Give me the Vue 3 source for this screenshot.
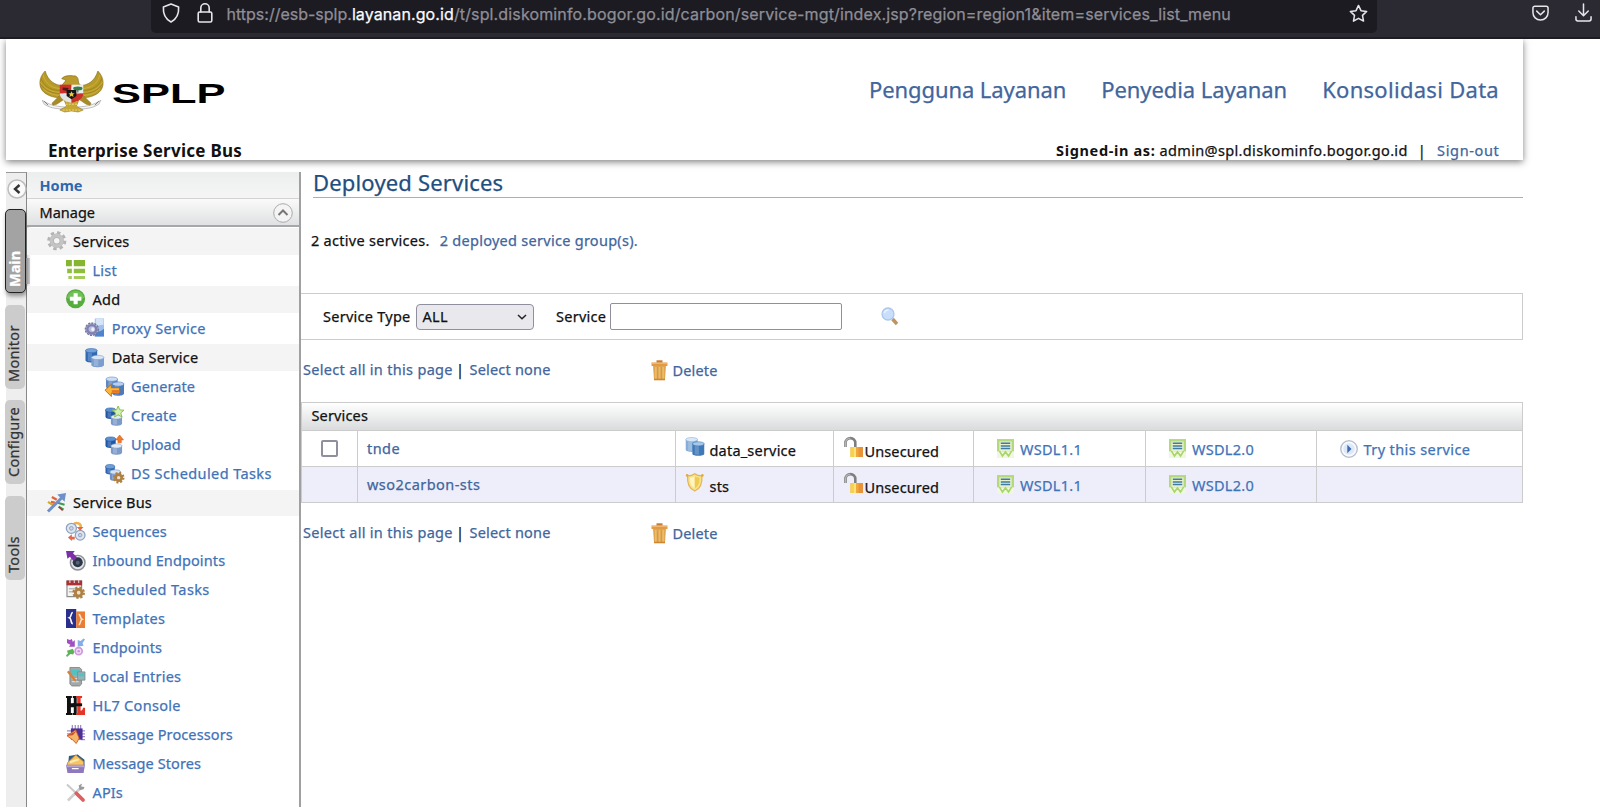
<script setup>
const db = (x, y, w, h, a, b) =>
  `<path d="M${x} ${y + 2}v${h - 4}c0 3 ${w} 3 ${w} 0v-${h - 4}z" fill="${b}"/><path d="M${x + w * 0.2} ${y + 4}h${w * 0.35}v${h - 5}h-${w * 0.35}z" fill="#fff" fill-opacity=".2"/><ellipse cx="${x + w / 2}" cy="${y + 2.2}" rx="${w / 2}" ry="2.200" fill="${a}" stroke="${b}" stroke-width=".6"/>`
const gear = (cx, cy, r, c, hole) =>
  `<circle cx="${cx}" cy="${cy}" r="${r * 0.8}" fill="none" stroke="${c}" stroke-width="${r * 0.4}" stroke-dasharray="${r * 0.34} ${r * 0.288}"/><circle cx="${cx}" cy="${cy}" r="${r * 0.52}" fill="${hole}" stroke="${c}" stroke-width="${r * 0.46}"/>`

const icons = {
  gear: gear(10, 10, 9.8, '#b4b4b4', '#f4f4f4') + '<circle cx="10" cy="10" r="5.400" fill="none" stroke="#c4c4c4" stroke-width="3.400"/>',
  list: '<path d="M0 0h6v6.300H0zM8 0h11.500v6.300H8z" fill="#86b52f"/><path d="M1.200 9h4.800v4.600H1.200zM8 9h11.500v4.600H8z" fill="#8fbe3a"/><path d="M2.400 16.300h3.600v3.200H2.400zM8 16.300h11.500v3.200H8z" fill="#a5cc5a"/>',
  add: '<circle cx="9.800" cy="10" r="9.800" fill="#56ac3c"/><path d="M1 9a9 9 0 0 1 17.600 0c-4 3-13 3-17.600 0z" fill="#72c056"/><path d="M7.800 4.300h4.200V8h3.800v4h-3.800v3.700H7.800V12H4V8h3.800z" fill="#fff"/>',
  proxy: '<path d="M10 .5h9.500v18.500h-9.500z" fill="#9fc0ea"/><path d="M11 1h8v6c-4 0-6 1-8 3z" fill="#d5e4f7"/><path d="M11 13c3 2 6 0 8.500-2v8h-9.500z" fill="#4f83cc"/><ellipse cx="7" cy="11.500" rx="6.600" ry="6.200" fill="#b9bbdc" stroke="#77779f" stroke-width="1.500" stroke-dasharray="2.200 1"/><ellipse cx="7" cy="11.500" rx="4.600" ry="4.200" fill="none" stroke="#7f80b0" stroke-width="2.400"/><ellipse cx="8" cy="11.500" rx="1.600" ry="2" fill="#eef"/>',
  data: db(0.5, 0.5, 12, 14, '#74a2d8', '#2f69b4') + db(6.5, 7.5, 13, 12, '#d8e5f6', '#7d9dce'),
  generate: db(1, 0, 12, 12, '#cddef3', '#5f88c2') + db(7.5, 5, 12, 14, '#b7d0ef', '#4c7bbd') + '<path d="M0 13.500l6.500-6V11H15v5.500H6.500V20z" fill="#f9b63a" stroke="#b5640c" stroke-width=".9"/><path d="M7 13.500h8v2.500H7z" fill="#e8732a"/>',
  create: db(0.5, 2, 10.5, 11, '#5a8fd0', '#1f56a4') + db(6, 9, 11.5, 11, '#e3eaf5', '#7d9bc8') + '<path d="M13.500 0l1.700 4 4.300.3-3.300 2.800 1.100 4.200-3.800-2.300-3.700 2.300 1.100-4.200L7.600 4.300l4.200-.3z" fill="#d5efb2" stroke="#86c047" stroke-width="1"/>',
  upload: db(0.5, 2, 10.5, 11, '#5a8fd0', '#1f56a4') + db(6, 9, 11.5, 11, '#e3eaf5', '#7d9bc8') + '<path d="M15 0l4 5h-2.300v3h-3.400V5H11z" fill="#ee7a2c" stroke="#d65f17" stroke-width=".6"/>',
  tasks: db(0.5, 0.5, 9.5, 10, '#6f9fd6', '#2a64b0') + db(5, 6, 11, 11, '#d5e2f4', '#6e91c6') + gear(14, 14, 6, '#b08043', '#f1dfc4'),
  bus: '<path d="M5 4l5 3M4 9l4 1" stroke="#e2603c" stroke-width="2.400"/><path d="M1 9l6 4" stroke="#d8a42c" stroke-width="2.200"/><path d="M11 10l7 2M12 14l5 3" stroke="#3f9a54" stroke-width="2.200"/><path d="M12 14l4 4" stroke="#a33" stroke-width="1.500"/><path d="M1 19L15 5" stroke="#6d8fca" stroke-width="3"/><path d="M10.500 1.500L19.500 0l-1.500 9z" fill="#6d8fca"/>',
  sequences: '<path d="M7 3c4-4 9-1 8 3" fill="none" stroke="#f0b04a" stroke-width="2.500"/><circle cx="5.500" cy="6.500" r="5.200" fill="#dfe6f0" stroke="#8fa3c0" stroke-width="1.300"/><circle cx="5.500" cy="6.500" r="1.900" fill="#c9d5e6" stroke="#8fa3c0"/><circle cx="14.500" cy="13.500" r="5" fill="#dfe6f0" stroke="#8fa3c0" stroke-width="1.300"/><circle cx="14.500" cy="13.500" r="1.800" fill="#c9d5e6" stroke="#8fa3c0"/><path d="M11 5h7l-3.500 4zM2 16l4-3.500V15h3v3H6v1.500z" fill="#e8674a"/>',
  inbound: '<circle cx="12" cy="12" r="7.500" fill="#e4e6ea" stroke="#8d9098" stroke-width="1.500"/><circle cx="12" cy="11.500" r="5.200" fill="#2c3644"/><circle cx="12" cy="12" r="2" fill="#51647c"/><path d="M0 0h9L7.200 2.300l4.300 4.400-3.700 3.700L4 6 1.500 8z" fill="#7d2fa8"/>',
  sched: '<path d="M1 1h15v16H1z" fill="#f4f4f2" stroke="#8d8d8d" stroke-width="1.200"/><path d="M.5.5h16v5H.5z" fill="#a83238"/><path d="M4 0v3M8.500 0v3M13 0v3" stroke="#e5cccc" stroke-width="1.200"/><path d="M3 9h10M3 12h8" stroke="#bbb" stroke-width="1.500"/>' + gear(13, 13, 6.5, '#b08043', '#f1dfc4'),
  templates: '<path d="M0 0h10.500v19.500H0z" fill="#2a2f8e"/><path d="M10.500 2.500h9V19.500h-9z" fill="#e87d33"/><path d="M7 3.500C4.500 3.500 6 8 3.500 9c2.500 1 1 6 3.500 6" fill="none" stroke="#fff" stroke-width="1.600"/><path d="M13 5.500c2.500 0 1 4 3.500 5-2.500 1-1 5.500-3.500 5.500" fill="none" stroke="#fde6d2" stroke-width="1.600"/>',
  endpoints: '<path d="M1 1l3 1 2-1 1 3 2-2v7H3l1.500-2L1 5z" fill="#a24fc0"/><path d="M12 2l3 1 3-2.500 1.500 1L17 5l1 3-6 1z" fill="#86aee6"/><path d="M1 13l6-2 1.500 3-1 3-3-.5L1 19.500 0 18l2-2z" fill="#5cb257"/><circle cx="13" cy="13.500" r="3.600" fill="#efdcf4" stroke="#cf9adb" stroke-width="1.800"/><circle cx="13" cy="13.500" r="1.200" fill="#c58ad3"/>',
  local: '<path d="M4 .5h10l2 2v15l-2 2H6l-2-2z" fill="#a3a8a8" stroke="#787d7d" stroke-width=".8"/><path d="M5 3h9v5H5z" fill="#4fc2c4"/><path d="M6 12h7M6 15h7" stroke="#d5d9d9" stroke-width="1.200"/><path d="M12 5h7.500v8.500H12z" fill="#9ab3b5" stroke="#6f8384" stroke-width=".7"/><path d="M13 6.500h5.500v3H13z" fill="#4cc4c8"/><path d="M1 5l2-1.500 7 9 .5 2.500-2.500-1z" fill="#d8803a"/>',
  hl7: '<path d="M0 0h6v2H5v5.500h3V2H7V0h4v19.500H7v-2h1v-6H5v6h1.500v2H0v-2h1V2H0z" fill="#111"/><path d="M10.500 0h6v2H15v13c1.500 0 2-1 2.500-3h2v7.500h-9v-2h1V2h-1z" fill="#e63527"/><path d="M7 7.500h9.500v3H7z" fill="#111"/>',
  processors: '<path d="M6.500 0v4M9.500 0v4M12.500 0v4M15 0v4M1 6h4M1 9h4M15 6h4.500M15 9h4.500M15 12h4.500M15 15h4.500" stroke="#9c8bc6" stroke-width="1.300"/><path d="M5 3.500h12V15H5z" fill="#4d2f96"/><path d="M1 11L10 5l3.500 8.500L10.500 19l-4-4z" fill="#f7b569" stroke="#c9561f" stroke-width=".9"/><path d="M1 11l6-.5L11 6z" fill="#c9502c"/>',
  stores: '<path d="M3 2l9-1.500 7 5.500v6H2z" fill="#315d85"/><path d="M1.500 9L10 1l8 7v4H1.500z" fill="#f7c45f" stroke="#d48a22" stroke-width=".9"/><path d="M4 8.500l9-3" stroke="#fde9b8" stroke-width="2"/><path d="M0 11h19.500L18 19.500H1.500z" fill="#9078bd"/><path d="M.5 11.500h18.500v2H.5z" fill="#b6a3d8"/><path d="M6 15h7" stroke="#fff" stroke-width="1.300"/>',
  apis: '<path d="M1 1.500L10 10" stroke="#c9c9c9" stroke-width="2"/><path d="M2 18l13-13" stroke="#cfcfcf" stroke-width="2.800"/><path d="M13 2.500L16.500.5l-1 3 3.500.5-1 2.500-4 1z" fill="#9a9a9a"/><path d="M10.500 10.500l7 7" stroke="#dd5f60" stroke-width="3.800" stroke-linecap="round"/>',
  dbRow: db(0.5, 0.5, 12.5, 15, '#d9e8f7', '#86aed8') + db(7.5, 5, 12.5, 14.5, '#a6c8eb', '#4079b8'),
  shield: '<path d="M2.500 3C5 3 8 2.500 10 .8 12 2.500 15 3 17.500 3c.6 8-1.500 13.500-7.500 16C4 16.500 1.900 11 2.500 3z" fill="#f9e38a" stroke="#e2b457" stroke-width="1.300"/><path d="M5 5c2 0 3.500-.5 5-1.500V16c-4-2-5.200-6-5-11z" fill="#fdf5c4"/><path d="M10 3.500V16c4-2 5.200-6 5-11-2 0-3.500-.5-5-1.500z" fill="#f0cb52"/><circle cx="2" cy="2.500" r="1.400" fill="#e0ab42"/><circle cx="18" cy="2.500" r="1.400" fill="#e0ab42"/>',
  lock: '<path d="M1.500 10V6a4.900 4.900 0 0 1 9.800 0v4" fill="none" stroke="#7e7e7e" stroke-width="2.600"/><path d="M1.500 10V6a4.900 4.900 0 0 1 4.900-4.900" fill="none" stroke="#b5b5b5" stroke-width="1.200"/><path d="M6.500 10H19v10H6.500z" fill="#f0a83a"/><path d="M6.500 10h3v10h-3z" fill="#f5d24a"/><path d="M9.500 10h2.500v10H9.500z" fill="#fbe27a"/><path d="M14.500 10H19v10h-4.500z" fill="#e8923a"/>',
  wsdl: '<path d="M0 0h18v20H0z" fill="#eff7e0"/><path d="M0 0h18v13H0z" fill="#b4d87c"/><path d="M2.500 2.500h13V13h-13z" fill="#e6f2cf"/><path d="M4 4.500h10M4 7.300h10M4 10h10" stroke="#3f7ba2" stroke-width="1.600"/><path d="M2.500 12.500l3.300 5.500L9 13.500l3.200 4.500 3.300-5.500" fill="none" stroke="#a8d468" stroke-width="1.700"/>',
  play: '<circle cx="9" cy="9" r="8.200" fill="#dfe8f7" stroke="#b9c0cb" stroke-width="1.500"/><circle cx="9" cy="9" r="6.600" fill="none" stroke="#f7faff" stroke-width="1.600"/><path d="M7.300 4.800L11.500 9l-4.200 4.200z" fill="#3b6cb4"/>',
  trash: '<path d="M2 5h13l-1 15H3z" fill="#dfa550"/><path d="M4.800 7v12M8.500 7v12M12.200 7v12" stroke="#eabb69" stroke-width="1.800"/><path d="M6.600 7v12M10.400 7v12" stroke="#cf9544" stroke-width=".8"/><path d="M.5 2.500h16V6H.5z" fill="#e39a45"/><path d="M1 3.300h15" stroke="#f0bd78" stroke-width="1"/><path d="M5.500.3h6v2.200h-6z" fill="#c97a2e"/><path d="M3 18.700h11v1.600H3z" fill="#cf8634"/>',
  search: '<path d="M11.500 12l4.500 5" stroke="#c0935e" stroke-width="3.400"/><circle cx="7" cy="7" r="6" fill="#c9defa" stroke="#aec6ec" stroke-width="1.300"/><path d="M3.500 6a4 4 0 0 1 4-3" fill="none" stroke="#eaf3ff" stroke-width="1.500"/>',
}

const menu = [
  ['Services', 'gear', 0, 's1', true],
  ['List', 'list', 1, 's2'],
  ['Add', 'add', 1, 's3', true],
  ['Proxy Service', 'proxy', 2, 's3'],
  ['Data Service', 'data', 2, 's2', true],
  ['Generate', 'generate', 3, 's1'],
  ['Create', 'create', 3, 's2'],
  ['Upload', 'upload', 3, 's1'],
  ['DS Scheduled Tasks', 'tasks', 3, 's4'],
  ['Service Bus', 'bus', 0, 's1', true],
  ['Sequences', 'sequences', 1, 's1'],
  ['Inbound Endpoints', 'inbound', 1, 's1'],
  ['Scheduled Tasks', 'sched', 1, 's4'],
  ['Templates', 'templates', 1, 's3'],
  ['Endpoints', 'endpoints', 1, 's1'],
  ['Local Entries', 'local', 1, 's2'],
  ['HL7 Console', 'hl7', 1, 's3'],
  ['Message Processors', 'processors', 1, 's1'],
  ['Message Stores', 'stores', 1, 's1'],
  ['APIs', 'apis', 1, 's1'],
]
const tabs = ['Main', 'Monitor', 'Configure', 'Tools']
const rows = [
  { name: 'tnde', type: 'data_service', icon: 'dbRow', selectable: true },
  { name: 'wso2carbon-sts', type: 'sts', icon: 'shield', selectable: false },
]
</script>

<template>
  <div class="page">
    <div class="browser">
      <div class="url">
        <svg class="i-shield" viewBox="0 0 18 20"><path d="M9 1l7.600 3c.5 7-2 12-7.600 15C3.400 16 .9 11 1.400 4z" /></svg>
        <svg class="i-lock" viewBox="0 0 16 20"><rect x="1.200" y="9" width="13.600" height="10" rx="1.500" /><path d="M3.800 9V5a4.200 4.200 0 0 1 8.400 0v4" /></svg>
        <span class="addr"><span class="a1">https://esb-splp.</span><b>layanan.go.id</b><span class="a2">/t/spl.diskominfo.bogor.go.id/carbon/service-mgt/index.jsp?region=region1&amp;item=services_list_menu</span></span>
        <svg class="i-star" viewBox="0 0 20 20"><path d="M10 1.500l2.600 5.500 6 .8-4.400 4.200 1.100 6L10 15.100 4.700 18l1.100-6L1.400 7.800l6-.8z" /></svg>
      </div>
      <svg class="i-pocket" viewBox="0 0 18 18"><path d="M3 1.200h12a2 2 0 0 1 2 2V8A8 8 0 0 1 1 8V3.200a2 2 0 0 1 2-2z" /><path d="M5 6.500l4 3.800 4-3.800" /></svg>
      <svg class="i-down" viewBox="0 0 18 20"><path d="M9 1v12M4 8.500l5 5 5-5M1 14.500V17a2 2 0 0 0 2 2h12a2 2 0 0 0 2-2v-2.500" /></svg>
    </div>

    <header class="head">
      <div class="brand">
        <svg class="garuda" viewBox="0 0 66 43">
          <g stroke="#7d6415" stroke-width=".6">
            <path d="M6 0C-1 7-1 17 5 22c5 4 12 6 19 5l1-12C16 15 9 10 6 0zM60 0c7 7 7 17 1 22-5 4-12 6-19 5l-1-12C50 15 57 10 60 0z" fill="#b89a26" />
            <path d="M4 4c2 9 9 14 19 14M1 11c4 7 11 11 21 11M4 18c5 5 11 7 19 7M62 4c-2 9-9 14-19 14M65 11c-4 7-11 11-21 11M62 18c-5 5-11 7-19 7" fill="none" stroke="#d9c04a" />
            <path d="M2 8c3 8 10 12 20 12M2 14c4 6 11 9 20 9M64 8c-3 8-10 12-20 12M64 14c-4 6-11 9-20 9" fill="none" stroke="#86701c" stroke-width=".5" />
            <path d="M22 16c2-3 5-5 5-7l-4-1c1-2 5-4 12-3 3-.5 5 2 5 5 0 2 1 4 4 6z" fill="#bb9b2b" />
          </g>
          <path d="M3 30c8 5 15 7 30 7s22-2 30-7l-2 4c-8 5-15 5-28 5s-20 0-28-5z" fill="#f4f4f4" stroke="#999" stroke-width=".6" />
          <path d="M5 31l4 4M61 31l-4 4" stroke="#555" stroke-width=".8" />
          <g stroke="#8a701c" stroke-width=".5">
            <path d="M22 24l-9 9 1 2 4-1 9-6zM44 24l9 9-1 2-4-1-9-6z" fill="#a98b26" />
            <path d="M25 29h16l-3 7 7 4-5 2-7-1-7 1-5-2 7-4z" fill="#c8a633" />
          </g>
          <path d="M27 31h13M27 34h12M24 40h18" stroke="#efdd85" stroke-width=".9" stroke-dasharray="2 1.200" />
          <path d="M21 14h12v9H21z" fill="#cb302a" /><path d="M33 14h12v9H33z" fill="#ececec" />
          <path d="M21 23h12v9.500c-7-1-12-4.500-12-9.500z" fill="#e4e4e4" /><path d="M33 23h12c0 5-5 8.500-12 9.500z" fill="#cb302a" />
          <path d="M24 17l6 .5-1 3-5-1z" fill="#541a17" /><ellipse cx="39.500" cy="17.800" rx="4.800" ry="2" fill="#2f8147" /><path d="M39.500 19v3" stroke="#3b5b31" />
          <path d="M28 19.500h10v6l-5 3.500-5-3.500z" fill="#161616" /><path d="M33 20.800l1 2 2.200.2-1.700 1.400.6 2.200-2.100-1.200-2.100 1.200.6-2.200-1.700-1.400 2.200-.2z" fill="#f0ca35" />
        </svg>
        <span class="splp">SPLP</span>
      </div>
      <nav class="top"><a class="t1">Pengguna Layanan</a><a class="t2">Penyedia Layanan</a><a class="t3">Konsolidasi Data</a></nav>
      <div class="product">Enterprise Service Bus</div>
      <div class="signed"><b>Signed-in as:</b><span class="who">admin@spl.diskominfo.bogor.go.id</span><i>|</i><a>Sign-out</a></div>
    </header>

    <div class="body">
      <aside class="tabs">
        <svg class="collapse" viewBox="0 0 20 20"><circle cx="10" cy="10" r="9" /><path d="M12.500 6L8 10l4.500 4" /></svg>
        <div v-for="(t, i) in tabs" :key="t" :class="['tab', { on: i === 0 }]"><span>{{ t }}</span></div>
      </aside>
      <aside class="menu">
        <div class="home">Home</div>
        <div class="manage"><span>Manage</span><svg viewBox="0 0 20 20"><circle cx="10" cy="10" r="9.300" /><path d="M5.500 12L10 7.500l4.500 4.500" /></svg></div>
        <div v-for="m in menu" :key="m[0]" :class="['item', 'd' + m[2], m[3], { group: m[4] }]">
          <div class="band"><svg viewBox="0 0 20 20" v-html="icons[m[1]]"></svg><span>{{ m[0] }}</span></div>
        </div>
        <i class="nub"></i>
      </aside>

      <main class="main">
        <h1>Deployed Services</h1>
        <p class="count"><span>2 active services.</span><a>2 deployed service group(s).</a></p>
        <div class="filter">
          <span class="l1">Service Type</span>
          <div class="select"><span>ALL</span><svg viewBox="0 0 10 6"><path d="M1 1l4 3.700L9 1" /></svg></div>
          <span class="l2">Service</span>
          <div class="input"></div>
          <svg class="search" viewBox="0 0 19 19" v-html="icons.search"></svg>
        </div>
        <div class="actions"><a class="all">Select all in this page</a><i>|</i><a class="none">Select none</a><svg viewBox="0 0 17 21" v-html="icons.trash"></svg><a class="del">Delete</a></div>
        <section class="table">
          <div class="th">Services</div>
          <div v-for="r in rows" :key="r.name" class="tr">
            <div class="c0"><div v-if="r.selectable" class="check"></div></div>
            <div class="c1"><a>{{ r.name }}</a></div>
            <div class="c2"><svg viewBox="0 0 20 20" v-html="icons[r.icon]"></svg><span>{{ r.type }}</span></div>
            <div class="c3"><svg viewBox="0 0 20 20" v-html="icons.lock"></svg><span>Unsecured</span></div>
            <div class="c4"><svg viewBox="0 0 18 20" v-html="icons.wsdl"></svg><a>WSDL1.1</a></div>
            <div class="c4"><svg viewBox="0 0 18 20" v-html="icons.wsdl"></svg><a>WSDL2.0</a></div>
            <div class="c6"><template v-if="r.selectable"><svg viewBox="0 0 18 18" v-html="icons.play"></svg><a>Try this service</a></template></div>
          </div>
        </section>
        <div class="actions"><a class="all">Select all in this page</a><i>|</i><a class="none">Select none</a><svg viewBox="0 0 17 21" v-html="icons.trash"></svg><a class="del">Delete</a></div>
      </main>
    </div>
  </div>
</template>

<style>
body { margin: 0; background: #fff; }
</style>
<style scoped>
* { box-sizing: border-box; }
.page { width: 1600px; height: 807px; overflow: hidden; background: #fff; color: #111; font: 14.5px/20px "Noto Sans", "Open Sans", sans-serif; white-space: nowrap; display: flex; flex-direction: column; -webkit-text-stroke: .25px; }
svg { display: block; flex: none; overflow: visible; }
i { font-style: normal; }
a { color: #41659c; }
.browser { height: 39px; flex: none; background: #2b2a33; border-bottom: 2px solid #1d1c21; display: flex; position: relative; z-index: 2; }
.browser svg { fill: none; stroke: #e6e6ea; stroke-width: 1.6; stroke-linejoin: round; stroke-linecap: round; }
.url { margin-left: 151px; width: 1226px; height: 33px; background: #1c1b22; border-radius: 0 0 5px 5px; display: flex; }
.i-shield { width: 18px; height: 20px; margin: 3px 0 0 10.5px; }
.i-lock { width: 16px; height: 20px; margin: 3px 0 0 17px; }
.addr { margin: 4px 0 0 14px; width: 1122px; font: 16px/20px Inter, Roboto, sans-serif; color: #8f8e96; }
.addr b { font-weight: 400; color: #fbfbfe; letter-spacing: .1px; }
.a2 { letter-spacing: .14px; }
.i-star { width: 19px; height: 19px; margin-top: 4px; }
.i-pocket { width: 17px; height: 17px; margin: 5px 0 0 155px; }
.i-down { width: 17px; height: 19px; margin: 3px 0 0 26px; }
.head { flex: none; margin-left: 5.5px; width: 1517.5px; height: 121px; background: #fff; box-shadow: 0 2px 7px rgba(0, 0, 0, .5); display: grid; grid-template: 84px 37px / 1fr auto; position: relative; z-index: 1; }
.brand { display: flex; padding: 32px 0 0 33.5px; }
.garuda { width: 65px; height: 42px; }
.splp { font: bold 28px/28px "Liberation Sans", sans-serif; color: #000; transform: scaleX(1.55); transform-origin: 0 0; margin: 9px 0 0 8px; height: 28px; -webkit-text-stroke: 0; }
.top { display: flex; gap: 35px; padding: 35px 24px 0 0; font-size: 22px; line-height: 30px; justify-content: flex-end; }
.t1, .t2 { letter-spacing: -.08px; } .t3 { letter-spacing: .29px; }
.product { font-weight: bold; font-size: 17px; line-height: 24px; padding: 16px 0 0 42.5px; letter-spacing: .26px; -webkit-text-stroke: 0; }
.signed { display: flex; justify-content: flex-end; padding: 17px 23.500px 0 0; letter-spacing: .35px; }
.signed b { letter-spacing: .65px; -webkit-text-stroke: 0; } .signed a { letter-spacing: .65px; }
.who { margin-left: 4px; } .signed i { margin: 0 11px 0 10px; }
.body { flex: 1; margin: 12px 0 0 6px; display: flex; }
.tabs { width: 21px; background: #eee; border-top: 1px solid #999; border-right: 1px solid #888; height: 635px; }
.collapse { width: 20px; height: 20px; margin: 6px 0 0 1px; }
.collapse circle { fill: #fafafa; stroke: #bdbdbd; stroke-width: 1.5; }
.collapse path { fill: none; stroke: #333; stroke-width: 2.4; }
.tab { width: 20px; height: 84px; margin: 11.6px 0 0 -1px; background: #ccc; border-radius: 5px; color: #333; position: relative; letter-spacing: .3px; }
.tab span { writing-mode: vertical-rl; transform: rotate(180deg); display: block; width: 17px; height: 84px; line-height: 17px; padding-top: 6.500px; }
.tab.on { background: #a3a3a3; border: 1px solid #222; width: 21px; margin-top: 10px; color: #fff; font-weight: bold; letter-spacing: 0; box-shadow: 1px 3px 4px rgba(0, 0, 0, .4); }
.menu { width: 274px; height: 635px; border-right: 2px solid #a0a0a0; position: relative; }
.home { height: 27px; background: linear-gradient(#eceeee, #f5f5f5); border-bottom: 1px solid #d3d3d3; color: #2e68b0; font-weight: bold; padding: 3px 0 0 12.5px; -webkit-text-stroke: 0; }
.manage { height: 28px; background: linear-gradient(#fafafa, #dfe1e2); border-bottom: 2px solid #a5a8ab; padding: 3px 6px 0 12.5px; display: flex; justify-content: space-between; margin-bottom: 1.4px; }
.manage svg { width: 20px; height: 20px; fill: #f4f4f4; stroke: #aaa; margin-top: 1px; }
.manage svg path { stroke: #777; stroke-width: 2; fill: none; }
.item { height: 29.03px; color: #3f73b8; }
.band { height: 26.6px; display: flex; align-items: center; }
.band svg { width: 19.5px; height: 19.5px; margin-top: -1px; }
.band span { margin: -2px 0 0 7px; }
.s1 { letter-spacing: .12px; } .s2 { letter-spacing: .2px; } .s3 { letter-spacing: .3px; } .s4 { letter-spacing: .4px; }
.group { color: #111; } .group .band { background: #f4f4f4; }
.d0 .band { padding-left: 19.5px; } .d1 .band { padding-left: 39px; } .d2 .band { padding-left: 58.2px; } .d3 .band { padding-left: 77.6px; }
.nub { position: absolute; left: -1px; top: 86px; width: 4px; height: 26px; background: linear-gradient(90deg, #888, #ccc); }
.main { width: 1222px; }
h1 { margin: -1px 0 0 11.5px; padding-left: .5px; font-weight: 400; font-size: 22px; line-height: 22px; height: 27px; color: #1f4e80; border-bottom: 1.5px solid #9fb0cf; letter-spacing: .17px; }
.count { margin: 31.5px 0 0 10px; height: 20px; display: flex; gap: 10px; letter-spacing: .28px; }
.filter { margin-top: 43.5px; height: 47px; border: 1px solid #ccc; border-left: 0; display: flex; align-items: center; padding-left: 22px; letter-spacing: .26px; }
.filter span { margin-top: -1px; }
.l1 { width: 92.5px; } .l2 { margin-left: 22.5px; width: 54px; }
.select { width: 118px; height: 26px; background: #e9e9ed; border: 1px solid #8f8f9d; border-radius: 4px; display: flex; align-items: center; justify-content: space-between; padding: 0 6px; }
.select svg { width: 10px; height: 6px; fill: none; stroke: #222; stroke-width: 1.5; }
.input { width: 232px; height: 27px; border: 1px solid #8f8f9d; border-radius: 2px; }
.search { width: 19px; height: 19px; margin-left: 39px; }
.actions { display: flex; height: 22px; margin-top: 19px; padding-left: 2px; }
.actions svg { width: 17px; height: 21px; margin-top: 1px; }
.all { width: 153px; letter-spacing: .31px; } .none { width: 181.500px; letter-spacing: .2px; margin-left: 5.5px; }
.actions i { width: 8px; } .del { margin: 1px 0 0 4.5px; letter-spacing: .15px; }
.table { margin-top: 21px; border: 1px solid #ccc; width: 1222px; height: 101px; }
.th { height: 28px; background: linear-gradient(#fff, #d9dbdc); border-bottom: 1px solid #ccc; padding: 2px 0 0 9.5px; letter-spacing: .15px; }
.tr { height: 35px; display: grid; grid-template-columns: 55px 318px 158px 140px 172px 171px 1fr; }
.tr > div { display: flex; border-left: 1px solid #ccc; }
.tr > div:first-child { border-left: 0; }
.tr + .tr { height: 36px; border-top: 1px solid #ccc; background: #eeeefa; }
.check { width: 17px; height: 17px; margin: 9px 0 0 19px; border: 2px solid #8f8f9d; border-radius: 2px; background: #fff; }
.c1 { padding: 7px 0 0 9px; letter-spacing: .46px; }
.c3 svg { width: 20px; height: 20px; margin: 6px 0 0 10px; }
.c2 svg { width: 19.5px; height: 19px; margin: 6px 0 0 9px; }
.c2 span { margin: 9px 0 0 5px; letter-spacing: .2px; } .c3 span { margin: 10px 0 0 .5px; letter-spacing: .12px; }
.c4 svg { width: 17px; height: 19px; margin: 8px 0 0 23px; } .c4 a { margin: 8px 0 0 6px; color: #3f73b8; letter-spacing: .28px; }
.c6 svg { width: 18px; height: 18px; margin: 9px 0 0 23px; } .c6 a { margin: 8px 0 0 5.5px; color: #3f73b8; letter-spacing: .4px; }
</style>
